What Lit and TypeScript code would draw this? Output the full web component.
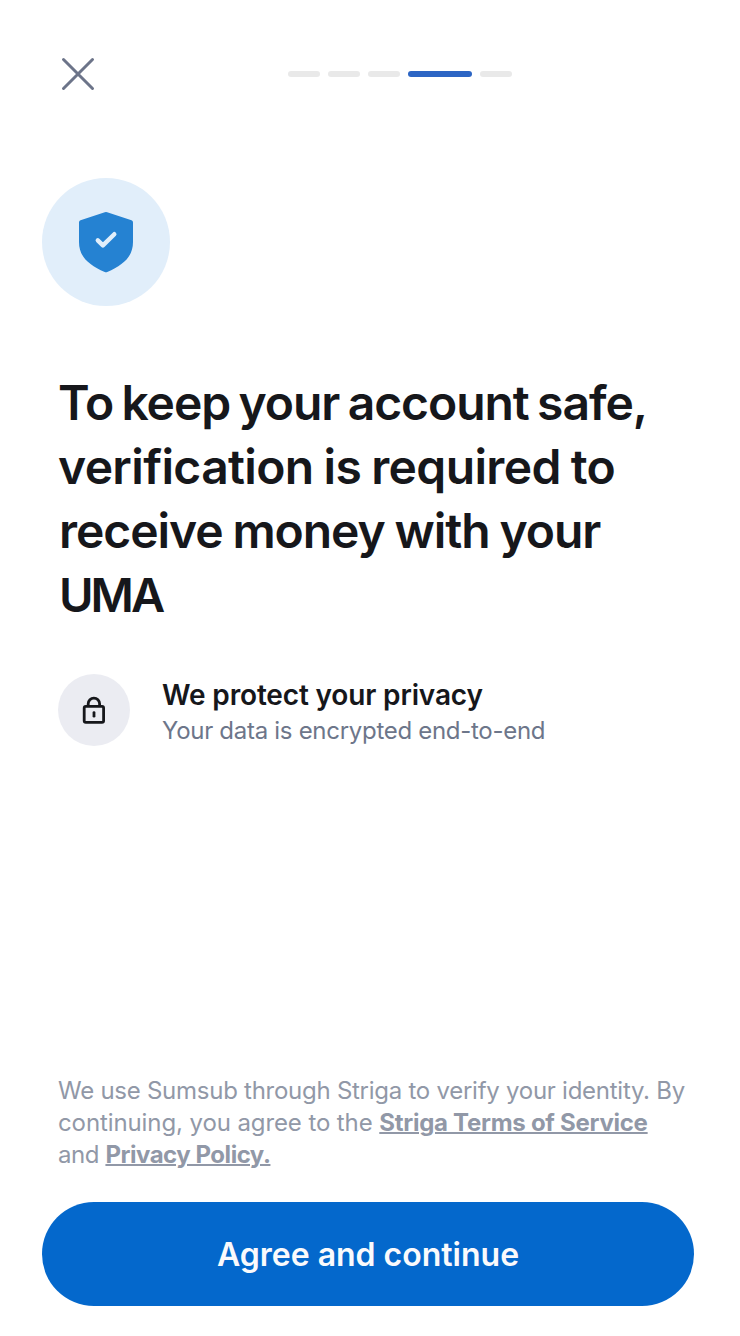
import { LitElement, html, css } from "lit";
import { customElement, state } from "lit/decorators.js";

@customElement("app-root")
export class AppRoot extends LitElement {
  @state() private steps = [false, false, false, true, false];

  static styles = css`
    :host { display: block; font-family: Inter, "Liberation Sans", sans-serif; color: #16171b; }
    .screen { box-sizing: border-box; width: 740px; height: 1336px; padding: 50px 46px 30px 42px; background: #fff; display: flex; flex-direction: column; }
    .top { display: flex; align-items: center; height: 48px; padding-left: 12px; }
    .close { display: block; border: 0; padding: 0; background: none; width: 48px; height: 48px; }
    .close svg, .hero svg, .badge svg { display: block; }
    .steps { display: flex; gap: 8px; margin-left: 186px; }
    .step { width: 32px; height: 6px; border-radius: 3px; background: #e9e9e9; }
    .step.on { width: 64px; background: #2c65c4; }
    .hero { margin-top: 80px; width: 128px; height: 128px; border-radius: 50%; background: #e1eefa; }
    h1 { margin: 65px 0 0 16px; font-size: 48px; line-height: 64px; font-weight: 600; white-space: nowrap; }
    .line { display: block; }
    .l1 { letter-spacing: -1.05px; word-spacing: -2.7px; }
    .l2 { letter-spacing: -0.65px; word-spacing: -1.4px; }
    .l3 { letter-spacing: -1.05px; word-spacing: -1.2px; padding-left: 1px; }
    .l4 { font-size: 47px; letter-spacing: -3px; padding-left: 1px; }
    .feature { display: flex; align-items: center; gap: 32px; margin: 45px 0 0 16px; white-space: nowrap; }
    .badge { width: 72px; height: 72px; border-radius: 50%; background: #ebecf2; }
    .text { padding-top: 5px; }
    .ft { font-size: 28px; line-height: 36px; font-weight: 600; letter-spacing: -0.15px; }
    .fs { font-size: 24px; line-height: 35px; color: #6d768a; letter-spacing: -0.29px; }
    .legal { margin: auto 0 31px 16px; font-size: 24px; line-height: 32px; color: #9198a7; white-space: nowrap; }
    .legal a { font-weight: 700; text-decoration: underline; text-decoration-thickness: 2px; }
    .g1 { letter-spacing: -0.26px; }
    .g2 { letter-spacing: -0.1px; }
    .g2 a { letter-spacing: -0.27px; }
    .g3 { letter-spacing: -0.42px; }
    .g3 a { letter-spacing: -0.48px; }
    .cta { border: 0; padding: 2px 0 0; height: 104px; border-radius: 52px; background: #0468cc; color: #fafafc; font: 600 32px/102px Inter, "Liberation Sans", sans-serif; }
  `;

  render() {
    return html`<main class="screen">
      <div class="top">
        <button class="close" aria-label="Close"><svg width="48" height="48" viewBox="0 0 48 48" fill="none" stroke="#6c7489" stroke-width="3" stroke-linecap="round"><path d="M9.5 9.5 38.5 38.5M38.5 9.5 9.5 38.5"/></svg></button>
        <div class="steps">${this.steps.map((on) => html`<span class="step ${on ? "on" : ""}"></span>`)}</div>
      </div>
      <div class="hero"><svg width="128" height="128" viewBox="0 0 128 128"><path d="M62.8 34.3Q64 33.8 65.2 34.3L89.5 42.2Q91 42.8 91 44.5V64C91 79 81 87 65.3 94Q64 94.6 62.7 94C47 87 37 79 37 64V44.5Q37 42.8 38.5 42.2Z" fill="#2582d2"/><path d="M55.8 62.4 60.9 67.4 72.3 56.2" fill="none" stroke="#e1eefa" stroke-width="4.4" stroke-linecap="round" stroke-linejoin="round"/></svg></div>
      <h1>
        <span class="line l1">To keep your account safe,</span>
        <span class="line l2">verification is required to</span>
        <span class="line l3">receive money with your</span>
        <span class="line l4">UMA</span>
      </h1>
      <section class="feature">
        <div class="badge"><svg width="72" height="72" viewBox="0 0 72 72" fill="none" stroke="#16171b" stroke-width="2.8" stroke-linejoin="round"><rect x="26.2" y="32.4" width="19.4" height="16" rx="1.6"/><path d="M30.2 32V29.8a5.7 5.7 0 0 1 11.4 0V32"/><path d="M36 38.6v3.6" stroke-linecap="round"/></svg></div>
        <div class="text"><div class="ft">We protect your privacy</div><div class="fs">Your data is encrypted end-to-end</div></div>
      </section>
      <div class="legal">
        <span class="line g1">We use Sumsub through Striga to verify your identity. By</span>
        <span class="line g2">continuing, you agree to the <a>Striga Terms of Service</a></span>
        <span class="line g3">and <a>Privacy Policy.</a></span>
      </div>
      <button class="cta">Agree and continue</button>
    </main>`;
  }
}
